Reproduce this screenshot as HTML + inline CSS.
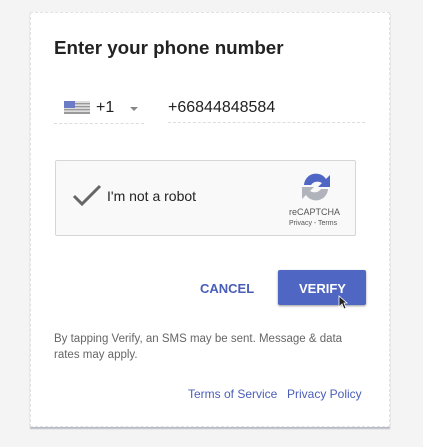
<!DOCTYPE html>
<html><head><meta charset="utf-8"><style>
*{margin:0;padding:0;box-sizing:border-box}
body{width:423px;height:447px;background:#f4f4f4;font-family:"Liberation Sans",Arial,sans-serif;position:relative;overflow:hidden}
.card{position:absolute;left:30px;top:12px;width:360px;height:415px;background:#fff;border:1px dashed #e2e2e2;box-shadow:0 2px 1px #b8bcc4}
.abs{position:absolute;white-space:nowrap}
</style></head><body>
<div class="card"></div>
<div class="abs" style="left:54px;top:37px;font-size:18.8px;font-weight:bold;color:#222">Enter your phone number</div>
<svg class="abs" style="left:64px;top:101px" width="26" height="13"><rect width="26" height="13" fill="#ddd"/><g fill="#999"><rect y="2" width="26" height="1.3"/><rect y="5" width="26" height="1.3"/><rect y="8" width="26" height="1.3"/><rect y="11" width="26" height="2"/></g><rect width="11" height="7" fill="#6b7bc6"/></svg>
<div class="abs" style="left:96px;top:99px;font-size:16px;color:#222">+1</div>
<div class="abs" style="left:130px;top:107px;width:0;height:0;border-left:4px solid transparent;border-right:4px solid transparent;border-top:4px solid #888"></div>
<div class="abs" style="left:54px;top:123px;width:90px;border-top:1px dashed #ddd"></div>
<div class="abs" style="left:168px;top:99px;font-size:16px;color:#222">+66844848584</div>
<div class="abs" style="left:168px;top:122px;width:197px;border-top:1px dashed #ddd"></div>
<div class="abs" style="left:55px;top:160px;width:301px;height:76px;background:#f9f9f9;border:1px solid #d6d6d6;border-radius:2px"></div>
<svg class="abs" style="left:72px;top:184px" width="30" height="22"><path d="M2 12 L10 20 L28 2" stroke="#666" stroke-width="3" fill="none"/></svg>
<div class="abs" style="left:107px;top:188px;font-size:14px;color:#222">I'm not a robot</div>
<svg class="abs" style="left:300px;top:171px" width="32" height="32"><path d="M4 14 A12 12 0 0 1 26 8 L30 4 L30 16 L18 16 L22 12 A8 8 0 0 0 11 14 Z" fill="#4f66c5"/><path d="M28 18 A12 12 0 0 1 6 24 L2 28 L2 16 L14 16 L10 20 A8 8 0 0 0 21 18 Z" fill="#b0b3bb"/></svg>
<div class="abs" style="left:289px;top:207px;font-size:9px;color:#555">reCAPTCHA</div>
<div class="abs" style="left:289px;top:220px;font-size:7px;color:#555">Privacy - Terms</div>
<div class="abs" style="left:200px;top:281px;font-size:13px;font-weight:bold;color:#4a5eb8">CANCEL</div>
<div class="abs" style="left:278px;top:270px;width:88px;height:35px;background:#4f66c3;border-radius:2px;box-shadow:0 1px 2px #999"></div>
<div class="abs" style="left:299px;top:281px;font-size:13px;font-weight:bold;color:#fff">VERIFY</div>
<svg class="abs" style="left:338px;top:295px" width="10" height="15"><path d="M1 1 L1 12 L4 9 L6 14 L8 13 L6 8 L9 8 Z" fill="#222" stroke="#fff" stroke-width="0.8"/></svg>
<div class="abs" style="left:54px;top:331px;font-size:11.5px;color:#666;line-height:16px">By tapping Verify, an SMS may be sent. Message &amp; data<br>rates may apply.</div>
<div class="abs" style="left:188px;top:387px;font-size:12px;color:#4a5eb8">Terms of Service</div>
<div class="abs" style="left:287px;top:387px;font-size:12px;color:#4a5eb8">Privacy Policy</div>
</body></html>
